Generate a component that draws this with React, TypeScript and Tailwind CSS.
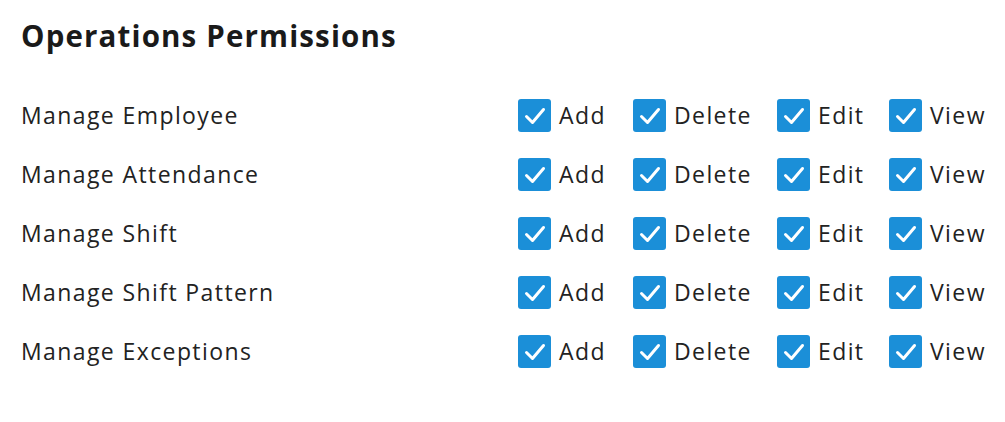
const rows = [
  'Manage Employee',
  'Manage Attendance',
  'Manage Shift',
  'Manage Shift Pattern',
  'Manage Exceptions',
]

const actions = [
  { label: 'Add', width: 'w-[115px]' },
  { label: 'Delete', width: 'w-[144px]' },
  { label: 'Edit', width: 'w-[112px]' },
  { label: 'View', width: 'w-[100px]' },
]

function CheckBox() {
  return (
    <span className="w-[33px] h-[33px] rounded-[3px] bg-[#1b8fd8] flex items-center justify-center flex-shrink-0">
      <svg width="24" height="24" viewBox="0 0 24 24" fill="none">
        <path d="M3.5 12.5 L9.5 18.5 L20.5 5.5" stroke="white" strokeWidth="3" strokeLinecap="round" strokeLinejoin="round" />
      </svg>
    </span>
  )
}

export default function App() {
  return (
    <div className="w-[1005px] h-[422px] bg-white pl-[21px] pt-[18px] text-[#222]" style={{ fontFamily: '"Open Sans", sans-serif' }}>
      <h1 className="text-[29.5px] leading-[36px] font-bold text-[#1a1a1a] tracking-[1.15px]">Operations Permissions</h1>
      <div className="mt-[32px] flex flex-col">
        {rows.map((name) => (
          <div key={name} className="h-[59px] flex items-center">
            <div className="w-[497px] text-[23px] tracking-[1.4px]">{name}</div>
            <div className="flex items-center">
              {actions.map((a) => (
                <label key={a.label} className={`${a.width} flex items-center gap-2`}>
                  <CheckBox />
                  <span className="text-[23px] tracking-[1.4px]">{a.label}</span>
                </label>
              ))}
            </div>
          </div>
        ))}
      </div>
    </div>
  )
}
